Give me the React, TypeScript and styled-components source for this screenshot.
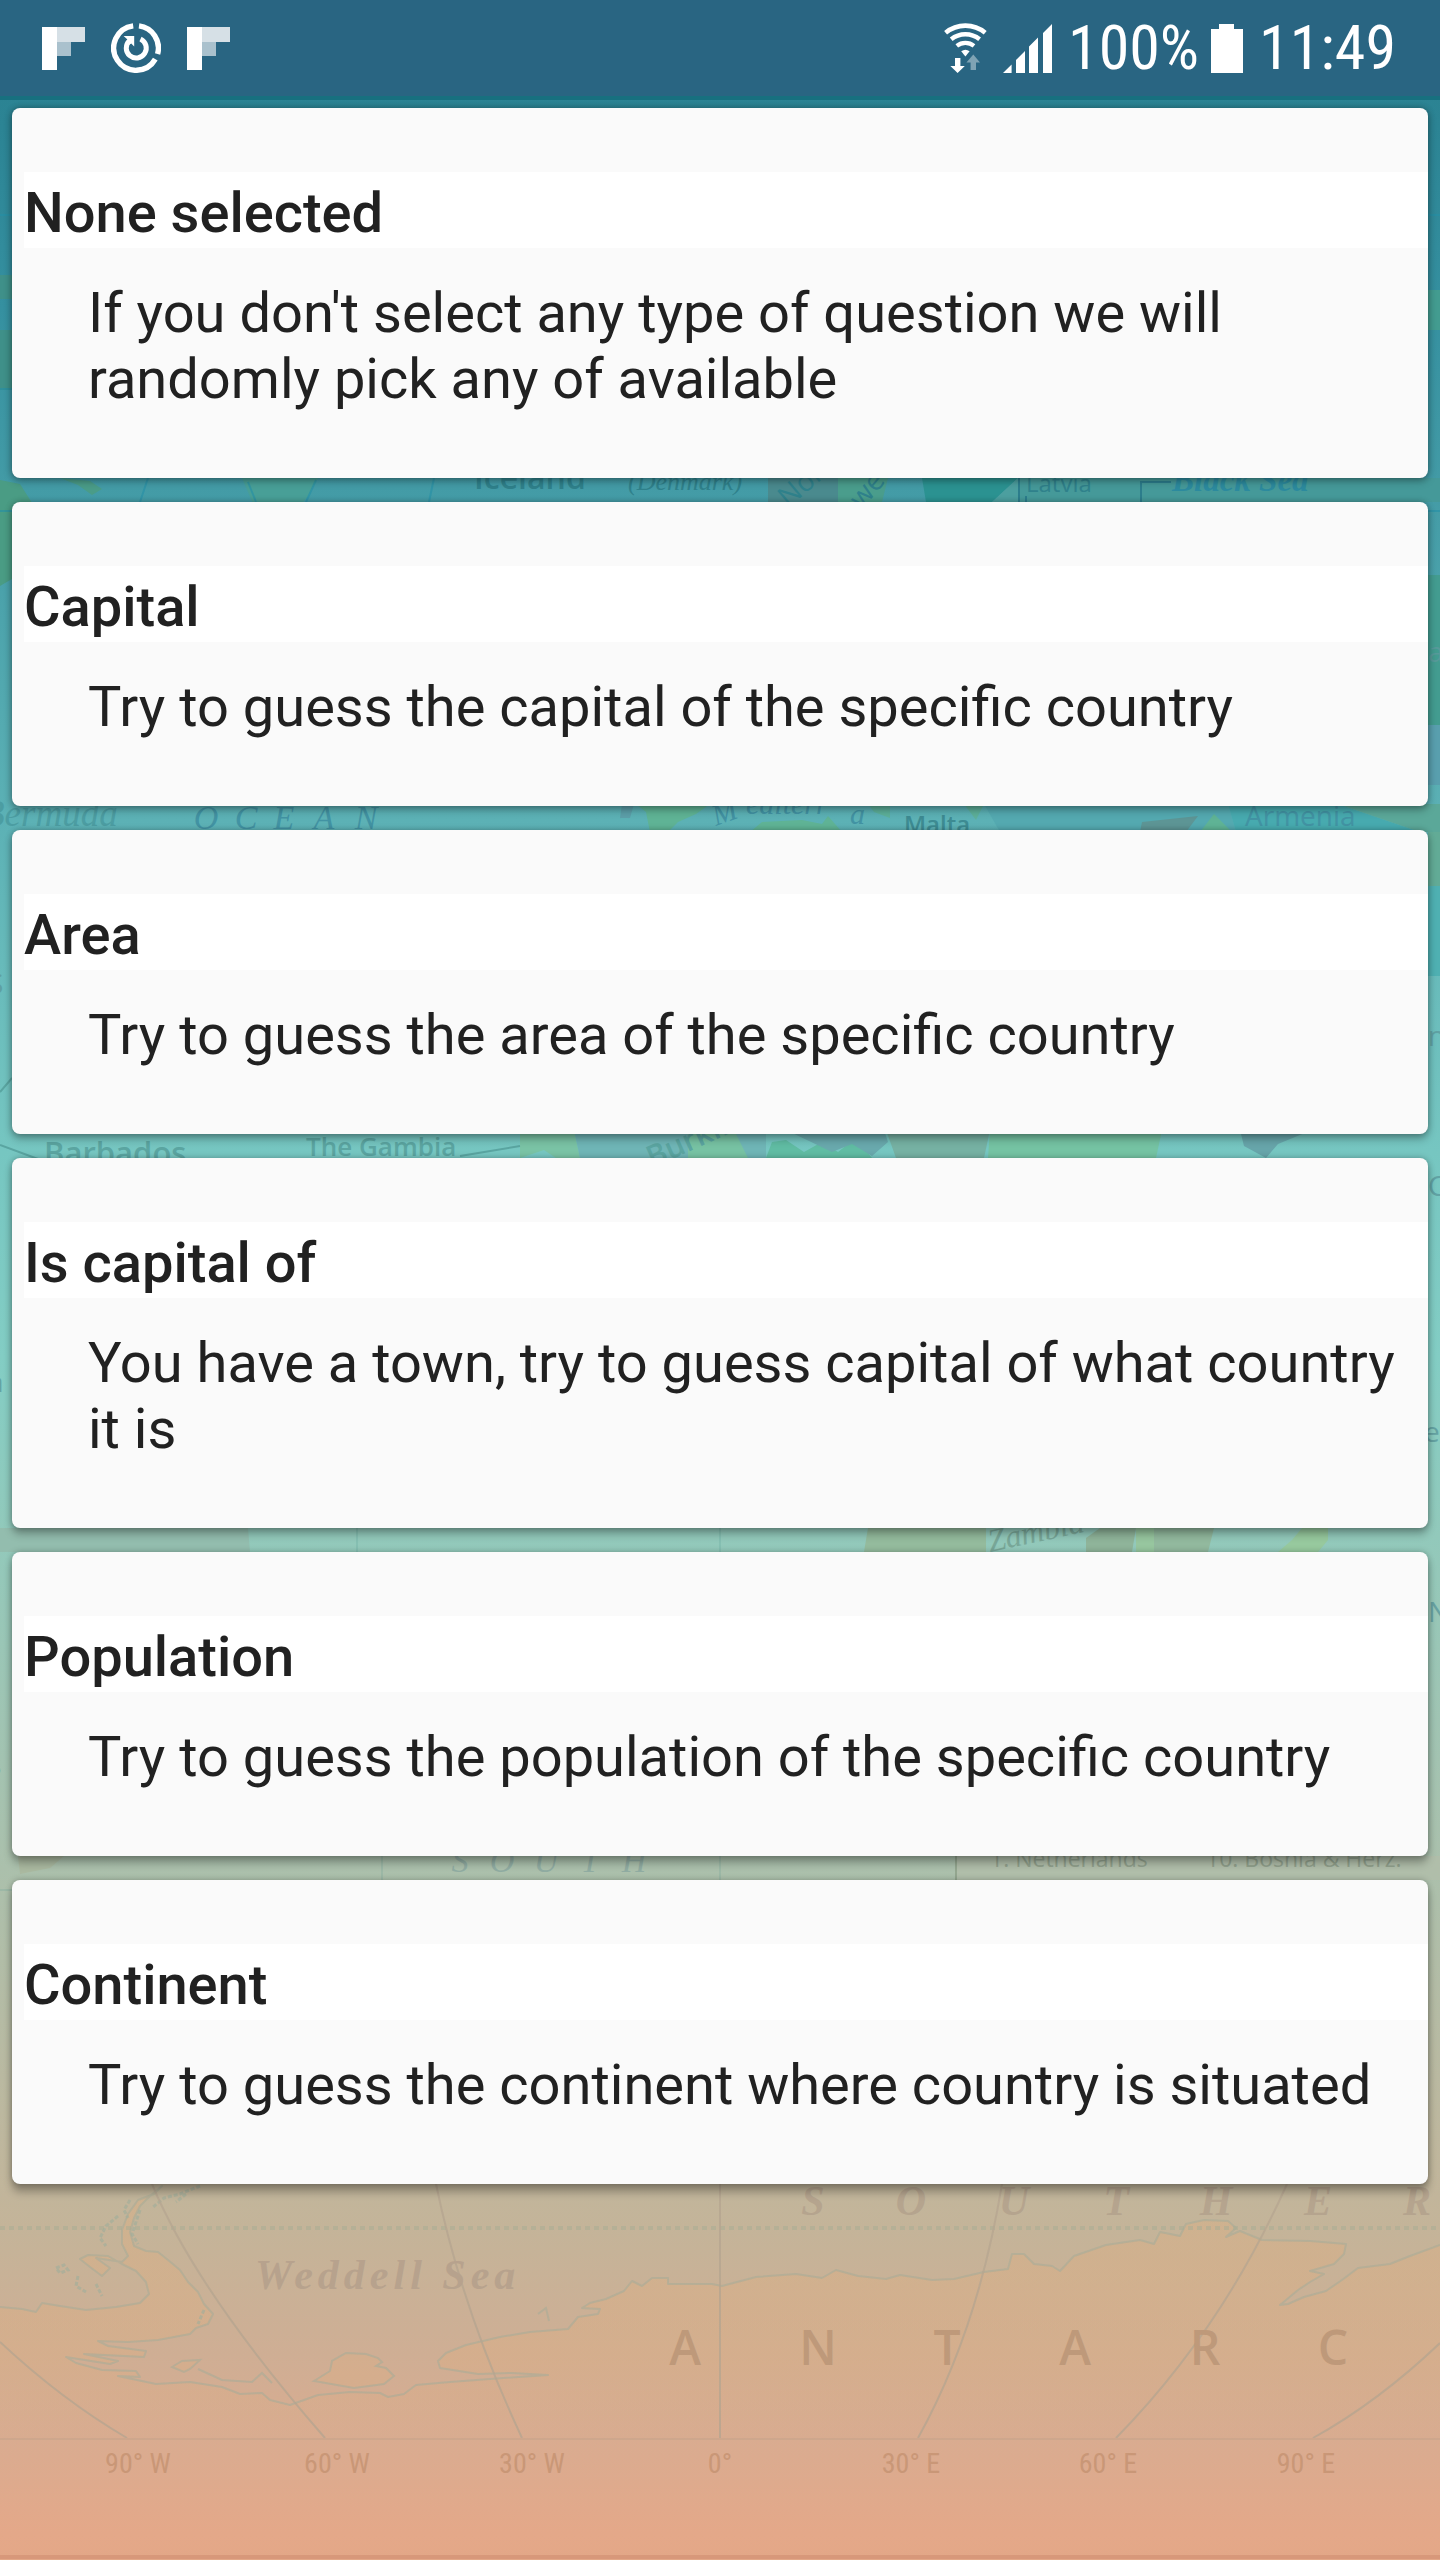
import React from 'react';
import styled, { createGlobalStyle } from 'styled-components';

const GlobalStyle = createGlobalStyle`
  *, *::before, *::after { box-sizing: border-box; }
  body {
    margin: 0;
    font-family: Roboto, "Noto Sans", sans-serif;
    color: #212121;
    background: #e3a888;
  }
`;

const Screen = styled.div`
  position: relative;
  isolation: isolate;
  min-height: 100vh;
  overflow: hidden;
  background: linear-gradient(
    to bottom,
    #2a8090 0%,
    #2c8494 5%,
    #3590a0 12%,
    #439ba6 19%,
    #5cb1b5 32%,
    #76c6c1 45%,
    #83cdc4 53%,
    #92c9bb 60%,
    #abc0ac 73%,
    #c4b499 87%,
    #cfae94 92%,
    #dbab8f 96%,
    #e4a889 99%,
    #e3a787 100%
  );
`;

const MapLayer = styled.svg`
  position: absolute;
  inset: 0;
  width: 100%;
  height: 100%;
  z-index: -1;
`;

const StatusBar = styled.header`
  display: flex;
  align-items: center;
  justify-content: space-between;
  height: 96px;
  padding: 0 44px 0 42px;
  background: #296582;
  box-shadow: 0 4px 0 #17707f;
  color: #fff;
`;

const StatusGroup = styled.div<{ $gap: number }>`
  display: flex;
  align-items: center;
  gap: ${({ $gap }) => $gap}px;
`;

const StatusIcon = styled.svg`
  display: block;
  flex: none;
`;

const StatusText = styled.span`
  font-family: "Roboto Condensed", Roboto, sans-serif;
  font-size: 62px;
  line-height: 72px;
`;

const CardList = styled.main`
  display: flex;
  flex-direction: column;
  gap: 24px;
  padding: 12px;
`;

const Card = styled.section<{ $depth: number }>`
  padding: 64px 0 66px 12px;
  border-radius: 8px;
  background: #fafafa;
  box-shadow: 0 ${({ $depth }) => $depth}px 8px rgba(0, 0, 0, 0.28), 0 0 6px rgba(0, 0, 0, 0.26);
`;

const CardTitle = styled.h2`
  margin: 0;
  padding: 8px 0 2px;
  background: #fff;
  font-size: 56px;
  font-weight: 500;
  line-height: 66px;
`;

const CardText = styled.p`
  margin: 0;
  padding: 32px 32px 0 64px;
  font-size: 56px;
  line-height: 66px;
`;

const questions = [
  {
    title: 'None selected',
    text: "If you don't select any type of question we will randomly pick any of available",
    depth: 3,
  },
  { title: 'Capital', text: 'Try to guess the capital of the specific country', depth: 4 },
  { title: 'Area', text: 'Try to guess the area of the specific country', depth: 5 },
  { title: 'Is capital of', text: 'You have a town, try to guess capital of what country it is', depth: 6 },
  { title: 'Population', text: 'Try to guess the population of the specific country', depth: 7 },
  { title: 'Continent', text: 'Try to guess the continent where country is situated', depth: 8 },
];

const FlipIcon = () => (
  <StatusIcon width="43" height="43" viewBox="0 0 43 43" aria-hidden="true">
    <path d="M0 0h15v43H0z" fill="#fff" />
    <path d="M15 0h28v15H15z" fill="#d6e0e6" />
    <path d="M15 15h14v14H15z" fill="#aac1cd" />
  </StatusIcon>
);

const SyncIcon = () => (
  <StatusIcon width="50" height="50" viewBox="0 0 50 50" fill="none" stroke="#fff" aria-hidden="true">
    <path d="M22.2 2.9A22.3 22.3 0 1 0 44.3 36.2" strokeWidth="5.4" />
    <path d="M28 2.9A22.3 22.3 0 0 1 46.6 31" strokeWidth="5.4" />
    <path d="M18.6 17.6A10 10 0 1 0 29.5 16" strokeWidth="5" />
    <path d="M12.6 13h10.6v10.6l-3-3.2-4 2.6-.8-4.4 1.6-1.6z" fill="#fff" stroke="none" />
  </StatusIcon>
);

const WifiIcon = () => (
  <StatusIcon width="43" height="50" viewBox="0 0 43 50" fill="none" stroke="#fff" aria-hidden="true">
    <path d="M1.6 9.8a31 31 0 0 1 39.6 0" strokeWidth="4.6" />
    <path d="M7.2 16.3a22.5 22.5 0 0 1 28.4 0" strokeWidth="4.4" />
    <path d="M12.8 22.9a13.8 13.8 0 0 1 17.2 0" strokeWidth="4.2" />
    <path d="M17.2 28.2a7 7 0 0 1 8.4 0L21.4 33.5z" fill="#fff" stroke="none" />
    <path d="M11 35h5.4v8h4.4L13.6 50 6.4 43H11z" fill="#fff" stroke="none" />
    <path d="M26.6 47h5.4v-7.6h4L29.3 31.6 22.4 39.4h4.2z" fill="#7fa3b4" stroke="none" />
  </StatusIcon>
);

const SignalIcon = () => (
  <StatusIcon width="49" height="49" viewBox="0 0 49 49" fill="#fff" aria-hidden="true">
    <path d="M0 49l8.6-8.6V49zM13 49V36l9-9v22zM26 49V22.5l9-9V49zM40 49V9l9-9v49z" />
  </StatusIcon>
);

const BatteryIcon = () => (
  <StatusIcon width="32" height="49" viewBox="0 0 32 49" fill="#fff" aria-hidden="true">
    <path d="M8 0h15v5h9v44H0V5h8z" />
  </StatusIcon>
);

const spread = (word: string, xs: number[], y: number) =>
  word.split('').map((c, i) => (
    <text key={i} x={xs[i]} y={y} textAnchor="middle">
      {c}
    </text>
  ));

const serif = '"Liberation Serif", serif';
const sans = '"Open Sans", sans-serif';

const coast =
  'M0 2307 22 2309 36 2312 42 2303 60 2306 86 2310 116 2307 140 2303 149 2294 146 2282 136 2271 122 2264 108 2256 88 2255 80 2259 ' +
  '90 2267 102 2276 110 2268 96 2258 122 2262 128 2256 122 2244 122 2230 128 2214 138 2200 154 2194 162 2186 150 2196 140 2206 134 2218 130 2232 ' +
  '134 2246 146 2251 158 2252 168 2260 180 2270 188 2282 198 2292 204 2304 213 2314 208 2324 196 2328 190 2334 158 2340 128 2342 98 2341 ' +
  '108 2346 146 2351 144 2357 84 2354 118 2361 110 2364 66 2357 76 2363 102 2370 136 2371 140 2377 118 2376 156 2384 190 2382 222 2387 240 2394 262 2393 ' +
  '270 2400 290 2405 318 2395 350 2392 380 2393 388 2397 404 2394 416 2385 450 2382 490 2379 548 2375 512 2373 478 2374 440 2368 438 2361 446 2353 466 2345 ' +
  '500 2337 530 2332 568 2329 578 2317 598 2314 600 2309 582 2308 590 2303 606 2299 624 2291 632 2281 642 2286 652 2278 668 2278 668 2284 712 2284 722 2286 ' +
  '756 2277 796 2274 822 2278 836 2270 858 2276 886 2279 900 2275 932 2280 954 2279 984 2272 1008 2269 1012 2254 1024 2254 1034 2264 1052 2266 1060 2271 1074 2256 ' +
  '1106 2245 1140 2240 1154 2244 1160 2232 1180 2236 1186 2224 1204 2220 1228 2221 1236 2228 1226 2237 1240 2231 1262 2240 1310 2241 1346 2244 1344 2254 ' +
  '1334 2264 1310 2271 1324 2274 1310 2282 1298 2290 1280 2305 1288 2304 1304 2297 1326 2291 1342 2280 1358 2268 1390 2264 1410 2256 1440 2245';

const WorldMap = () => (
  <MapLayer viewBox="0 0 1440 2560" preserveAspectRatio="xMidYMax slice" aria-hidden="true">
    <defs>
      <linearGradient id="ice" gradientUnits="userSpaceOnUse" x1="0" y1="2184" x2="0" y2="2439">
        <stop offset="0" stopColor="#dfae80" stopOpacity=".4" />
        <stop offset=".7" stopColor="#dfae80" stopOpacity=".34" />
        <stop offset="1" stopColor="#dfae80" stopOpacity="0" />
      </linearGradient>
    </defs>

    {/* northern lands */}
    <g>
      <path d="M0 480l20 4 14 22v60l-34 20z" fill="#4a9c84" />
      <path d="M60 478l30 3 12 8-10 6-14-10z" fill="#4a9c88" />
      <path d="M242 478h76l-10 18-8 10h-46z" fill="#489f97" />
      <path d="M768 478h70v24h-70z" fill="#4a8a8e" />
      <path d="M838 478h50l-6 24h-44z" fill="#4a9d8c" />
      <path d="M922 478h96l-26 24h-66z" fill="#2b9291" />
      <path d="M992 502l26-24v24z" fill="#4c9f9f" />
      <path d="M1018 478h422v24h-422z" fill="#459999" />
      <path d="M0 275h12v24H0zM0 330h12v60H0z" fill="#3f9089" />
      <path d="M1428 290h12v40h-12zM1428 575h12v150h-12z" fill="#439c90" />
      <path d="M1428 725h12v60h-12z" fill="#599fae" />
      <path d="M1428 826h12v60h-12z" fill="#62ab96" />
      <path d="M1428 886h12v90h-12z" fill="#4fb0b2" />
    </g>
    <g stroke="#2590a6" strokeWidth="2" fill="none" opacity=".6">
      <path d="M0 215h12M1428 215h12M0 389h12M148 478l-8 24M434 478l-5 24M0 511h12M1428 511h12M248 482l8 20M316 480l-10 22" />
    </g>
    <path d="M1141 502v-20h30M1019 478v24M1026 496v6" stroke="#2c7d8c" strokeWidth="2" fill="none" />
    <g fill="#2f818b">
      <text x="474" y="489" fontFamily={sans} fontSize="32" fontWeight="600">Iceland</text>
      <text x="628" y="490" fontFamily={serif} fontSize="26" fontStyle="italic">(Denmark)</text>
      <text x="1026" y="492" fontFamily={sans} fontSize="24">Latvia</text>
      <text x="1172" y="491" fontFamily={serif} fontSize="33" fontWeight="700" fontStyle="italic" fill="#2c8a9e">Black Sea</text>
      <text x="788" y="508" fontFamily={sans} fontSize="28" transform="rotate(-40 788 508)">Nor</text>
      <text x="862" y="510" fontFamily={sans} fontSize="28" transform="rotate(-50 862 510)">we</text>
    </g>

    {/* Mediterranean */}
    <path d="M636 804h74l-14 10-18 8-10 10h-18l-4-20z" fill="#5fb395" />
    <path d="M622 804h12l-4 14h-10z" fill="#5c9fa9" />
    <path d="M750 832l12-10 40-2 20 4 6-8 14 16z" fill="#5fb395" />
    <path d="M868 804h22v14l-16-6zM964 804h20l-8 16z" fill="#5db09a" />
    <path d="M984 804h244l8 28h-236z" fill="#54a9b0" />
    <path d="M1140 832l2-10 56-6-12 16z" fill="#5d9595" />
    <path d="M1200 832l14-18 18 18z" fill="#5fb395" />
    <path d="M1228 804h110l82 28h-184z" fill="#47aaaf" />
    <path d="M1338 804h102v28h-20z" fill="#5ba899" />
    <g fill="#4293a3">
      <text x="-18" y="826" fontFamily={serif} fontSize="37" fontStyle="italic" fill="#4c9da2">Bermuda</text>
      <g fontFamily={serif} fontSize="34" fontStyle="italic">{spread('OCEAN', [206, 246, 284, 324, 366], 829)}</g>
      <g fontFamily={serif} fontSize="30" fontStyle="italic">
        <text x="716" y="826" transform="rotate(-20 716 826)">M</text>
        <text x="746" y="814">editerr</text>
        <text x="850" y="824">a</text>
      </g>
      <text x="904" y="833" fontFamily={sans} fontSize="24" fontWeight="600" fill="#3d8b92">Malta</text>
      <text x="1245" y="826" fontFamily={sans} fontSize="28">Armenia</text>
    </g>

    {/* west Africa */}
    <path d="M520 1130h54l6 28h-24l-12-8-24 8z" fill="#7ac3a5" />
    <path d="M574 1130h192v28H580z" fill="#6fb5b6" />
    <path d="M688 1130h46l14 28h-60z" fill="#77c2a3" />
    <path d="M766 1158l6-16 14-2 18 12 18-10 16 10 18-14 16 20z" fill="#60bca3" />
    <path d="M786 1130h98l4 12-16 14-20-12-20 8z" fill="#69a9ad" />
    <path d="M886 1130h104l-6 28h-88z" fill="#76b1a3" />
    <path d="M990 1130h172l-6 28H988z" fill="#75c3a3" />
    <path d="M1240 1130h72l-34 14-12 14-22-12z" fill="#67a5aa" />
    <path d="M0 1145l38 14M460 1156l60-10M0 1092l12-14" stroke="#5aa5a1" strokeWidth="2" />
    <g fill="#5ba5a1" fontFamily={sans} fontWeight="600">
      <text x="44" y="1164" fontSize="31">Barbados</text>
      <text x="306" y="1156" fontSize="26">The Gambia</text>
      <text x="652" y="1168" fontSize="30" transform="rotate(-24 652 1168)">Burkina</text>
    </g>

    {/* southern Africa */}
    <path d="M0 1528h248l2 24H0z" fill="#93bdae" />
    <path d="M868 1528h118v24H864z" fill="#94bb9d" />
    <path d="M1086 1552v-14l14-10h36l-4 24z" fill="#8fb49a" />
    <path d="M1136 1528h18v24h-18z" fill="#97c69f" />
    <path d="M1154 1528h60l-6 24h-54z" fill="#92b99e" />
    <path d="M1302 1528h26v12l-10 12h-40l14-12z" fill="#97c99e" />
    <path d="M357 1528v24M720 1528v24" stroke="#85bfb2" strokeWidth="2" />
    <path d="M382 1856v24M720 1856v24M0 1890h12" stroke="#9cb8a6" strokeWidth="2" />
    <text x="990" y="1552" fontFamily={serif} fontSize="32" fontStyle="italic" fill="#78a798" transform="rotate(-12 990 1552)">Zambia</text>

    {/* legend */}
    <path d="M956 1856h484v24H956z" fill="#b0beaa" />
    <path d="M956 1856v24" stroke="#93a68f" strokeWidth="2" />
    <path d="M18 1856h46l-14 12-30 6z" fill="#aab9a0" />
    <g fill="#90a08c" fontFamily={sans} fontSize="23">
      <text x="990" y="1867">1. Netherlands</text>
      <text x="1206" y="1867">10. Bosnia &amp; Herz.</text>
    </g>
    <g fill="#90aca2" fontFamily={serif} fontSize="34" fontStyle="italic">{spread('SOUTH', [460, 502, 546, 590, 634], 1872)}</g>
    <g fill="#5c9a9d" fontFamily={sans} fontSize="28" opacity=".8">
      <text x="1428" y="662">a</text>
      <text x="1428" y="1046">n</text>
      <text x="1428" y="1196">Ca</text>
      <text x="-12" y="994">S</text>
      <text x="-12" y="1392">a</text>
      <text x="1424" y="1442">el</text>
      <text x="1428" y="1622">N</text>
      <text x="-14" y="1776">S</text>
    </g>

    {/* Antarctica */}
    <path d={`${coast} 1440 2439 0 2439z`} fill="url(#ice)" />
    <path d={coast} fill="none" stroke="#a9ab98" strokeOpacity=".6" strokeWidth="2" strokeLinejoin="round" />
    <path d="M314 2381l16-10 2-10 14-8 20 1 12 4 4 4-6 4 10 2 8 8-10 8-30 4z" fill="#dfae80" fillOpacity=".3" stroke="#a9ab98" strokeOpacity=".6" strokeWidth="2" />
    <path d="M172 2367l10-6 18-1-10 9-6 3z" fill="#dfae80" fillOpacity=".3" stroke="#a9ab98" strokeOpacity=".6" strokeWidth="2" />
    <path d="M198 2369l24 11 30 2 10-9 10 10M538 2314l8-6 3 13" fill="none" stroke="#a9ab98" strokeOpacity=".6" strokeWidth="2" />
    <path
      d="M200 2186l-20 8-16 4-12 10M130 2200l-6 10 4 8M118 2216l-12 10-6 12 6 8M140 2210l-4 12-4 12 6 10M186 2194l-10 8M56 2268l8-3 4 5-8 3zM78 2276l-2 10 10 6M96 2284l6 12M204 2310l-6 14"
      fill="none"
      stroke="#9fad9b"
      strokeOpacity=".6"
      strokeWidth="3"
      strokeDasharray="4 2"
    />
    <path d="M0 2228h1440" stroke="#a5ab94" strokeOpacity=".5" strokeWidth="4" strokeDasharray="5 4" />
    <g fill="none" stroke="#b5a590" strokeWidth="2" opacity=".75">
      <path d="M0 2342Q62 2400 127 2438" />
      <path d="M152 2184Q196 2290 325 2438" />
      <path d="M436 2184Q462 2310 522 2438" />
      <path d="M720 2184v254" />
      <path d="M1002 2184Q978 2330 918 2438" />
      <path d="M1287 2184Q1222 2330 1116 2438" />
      <path d="M1440 2343Q1378 2402 1313 2438" />
      <path d="M0 2439h1440" stroke="#cba68c" />
    </g>
    <g fill="#b5a48e" fontFamily={serif} fontSize="42" fontWeight="700" fontStyle="italic">
      {spread('SOUTHER', [813, 911, 1014, 1116, 1216, 1318, 1417], 2215)}
      <text x="255" y="2289" letterSpacing="5" fill="#b7a28d">Weddell Sea</text>
    </g>
    <g fill="#be997a" fontFamily={sans} fontSize="48" fontWeight="600">
      {spread('ANTARC', [685, 818, 947, 1075, 1205, 1333], 2365)}
    </g>
    <g fill="#c99777" fontFamily='"Roboto Condensed", "Open Sans", sans-serif' fontSize="28" textAnchor="middle">
      <text x="138" y="2473">90° W</text>
      <text x="337" y="2473">60° W</text>
      <text x="532" y="2473">30° W</text>
      <text x="720" y="2473">0°</text>
      <text x="911" y="2473">30° E</text>
      <text x="1108" y="2473">60° E</text>
      <text x="1306" y="2473">90° E</text>
    </g>
    <path d="M0 2557h1440" stroke="#d8987a" strokeWidth="4" />
  </MapLayer>
);

export default function App() {
  return (
    <>
      <GlobalStyle />
      <Screen>
        <WorldMap />
        <StatusBar>
          <StatusGroup $gap={26}>
            <FlipIcon />
            <SyncIcon />
            <FlipIcon />
          </StatusGroup>
          <StatusGroup $gap={16}>
            <WifiIcon />
            <SignalIcon />
            <StatusGroup $gap={12}>
              <StatusText>100%</StatusText>
              <BatteryIcon />
            </StatusGroup>
            <StatusText>11:49</StatusText>
          </StatusGroup>
        </StatusBar>
        <CardList>
          {questions.map((q) => (
            <Card key={q.title} $depth={q.depth}>
              <CardTitle>{q.title}</CardTitle>
              <CardText>{q.text}</CardText>
            </Card>
          ))}
        </CardList>
      </Screen>
    </>
  );
}
